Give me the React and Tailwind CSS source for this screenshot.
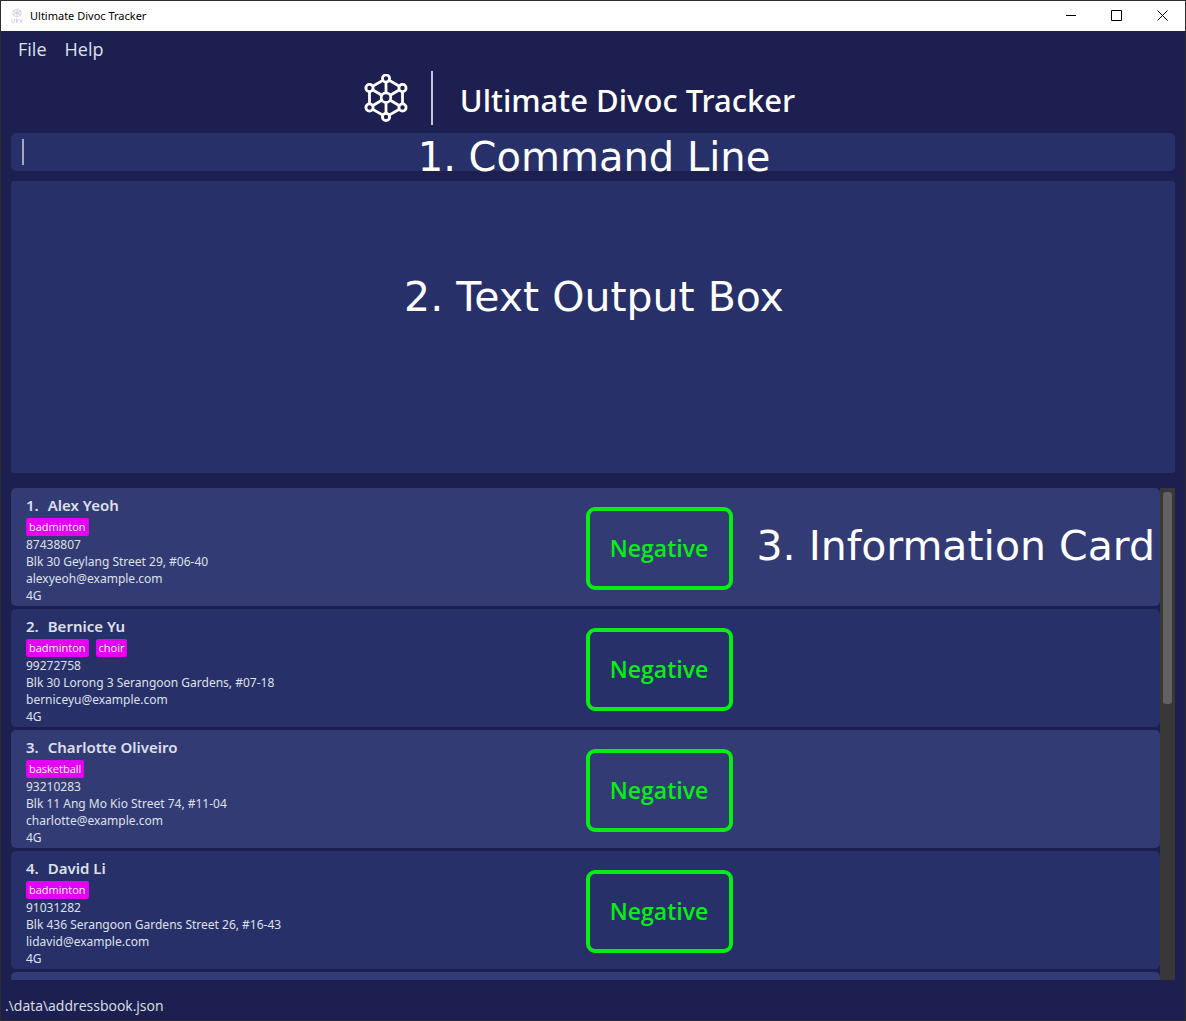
import React from "react";

const people = [
  { name: "Alex Yeoh", tags: ["badminton"], phone: "87438807", address: "Blk 30 Geylang Street 29, #06-40", email: "alexyeoh@example.com", group: "4G" },
  { name: "Bernice Yu", tags: ["badminton", "choir"], phone: "99272758", address: "Blk 30 Lorong 3 Serangoon Gardens, #07-18", email: "berniceyu@example.com", group: "4G" },
  { name: "Charlotte Oliveiro", tags: ["basketball"], phone: "93210283", address: "Blk 11 Ang Mo Kio Street 74, #11-04", email: "charlotte@example.com", group: "4G" },
  { name: "David Li", tags: ["badminton"], phone: "91031282", address: "Blk 436 Serangoon Gardens Street 26, #16-43", email: "lidavid@example.com", group: "4G" },
];

function Molecule({ className }) {
  const outer = [[22, 4.5], [38.5, 14], [38.5, 33.5], [22, 43], [5.5, 33.5], [5.5, 14]];
  return (
    <svg viewBox="0 0 44 49" className={className} fill="none" stroke="currentColor" strokeWidth="2.8" aria-hidden="true">
      <path d="M22 4.500 38.500 14V33.500L22 43 5.500 33.500V14ZM22 4.500V43M5.500 14 38.500 33.500M38.500 14 5.500 33.500" />
      {outer.map(([x, y]) => (
        <circle key={`${x}-${y}`} cx={x} cy={y} r="3.6" className="fill-[#1c1f4f]" />
      ))}
      <circle cx="22" cy="23.7" r="4.8" className="fill-[#1c1f4f]" />
    </svg>
  );
}

function AppIcon() {
  return (
    <svg viewBox="0 0 12 16" className="h-4 w-3 text-gray-300" fill="none" stroke="currentColor" aria-hidden="true">
      <path d="M6 1 10 3V7L6 9 2 7V3ZM6 1V9M2 3 10 7M10 3 2 7" />
      <circle cx="6" cy="5" r="1.2" />
      <path d="M1 11V14Q2 15.500 3.500 14V11M5.500 11V14.500H6Q8 13 6 11ZM8.500 11 10 14.500 11.500 11" />
    </svg>
  );
}

function WindowButton({ label, children }) {
  return (
    <button type="button" aria-label={label} className="flex h-full w-[46px] items-center justify-center pb-px">
      <svg viewBox="0 0 11 11" className="size-[11px]" fill="none" stroke="black" aria-hidden="true">
        {children}
      </svg>
    </button>
  );
}

const caption = "font-['DejaVu_Sans',sans-serif] leading-[48px] whitespace-nowrap text-white";

function PersonCard({ index, person, children }) {
  return (
    <li className={`grid h-[118px] shrink-0 grid-cols-2 rounded-[5px] ${index % 2 ? "bg-[#273068]" : "bg-[#323b74]"}`}>
      <div className="pt-[7px] pl-[15px] text-[12px] leading-[17px]">
        <h2 className="flex h-[23px] gap-[9px] text-[15px] leading-[21px] font-semibold">
          <span>{index + 1}.</span>
          <span>{person.name}</span>
        </h2>
        <ul className="flex gap-[7px]">
          {person.tags.map((tag) => (
            <li key={tag} className="h-[18px] rounded-[2px] bg-[#e600f5] px-[3px] font-['Open_Sans',sans-serif] text-[11px] leading-[18px] text-white">{tag}</li>
          ))}
        </ul>
        <p>{person.phone}</p>
        <p>{person.address}</p>
        <p>{person.email}</p>
        <p>{person.group}</p>
      </div>
      <div className="flex items-center gap-6 pt-[2px]">
        <div className="flex h-[83px] w-[147px] shrink-0 items-center justify-center rounded-[9px] border-4 border-[#08ee14] font-['Open_Sans',sans-serif] text-[23px] font-semibold text-[#08ee14]">
          Negative
        </div>
        {children}
      </div>
    </li>
  );
}

export default function App() {
  return (
    <div className="flex h-screen flex-col border border-[#2d2d30] bg-[#1c1f4f] font-['Noto_Sans',sans-serif] text-[#dfe0ea]">
      <header className="flex h-[30px] shrink-0 items-center bg-white pl-[10px] text-black">
        <AppIcon />
        <h1 className="ml-[7px] flex-1 text-[11px]">Ultimate Divoc Tracker</h1>
        <WindowButton label="Minimize"><path d="M1 5.500H11" /></WindowButton>
        <WindowButton label="Maximize"><path d="M.5.500H10.500V10.500H.5Z" /></WindowButton>
        <WindowButton label="Close"><path d="M.5.500 10.500 10.500M10.500.500.500 10.500" /></WindowButton>
      </header>
      <nav className="flex h-9 shrink-0 items-center gap-[18px] pl-[17px] font-['Open_Sans',sans-serif] text-[18px]">
        <button type="button">File</button>
        <button type="button">Help</button>
      </nav>
      <div className="flex h-[66px] shrink-0 items-center justify-center pr-[27px] pb-1 text-white">
        <Molecule className="h-[49px] w-[44px]" />
        <div className="ml-[23px] h-[54px] w-[2px] bg-[#c5c6d4]" />
        <p className="ml-[27px] pt-1 text-[31px] font-medium whitespace-nowrap">Ultimate Divoc Tracker</p>
      </div>
      <main className="flex min-h-0 flex-1 flex-col px-[10px]">
        <div className="relative h-[38px] shrink-0">
          <input aria-label="Command line" className="h-full w-full rounded-[5px] bg-[#273068] px-3 outline-none" />
          <span className="absolute top-[6px] left-[11px] h-[26px] w-[2px] bg-[#a3a6c2]" />
          <span className={`pointer-events-none absolute inset-x-0 top-0 pl-[2px] text-center text-[40px] ${caption}`}>1. Command Line</span>
        </div>
        <section className="mt-[10px] flex h-[292px] shrink-0 justify-center rounded-[3px] bg-[#273068] pt-[92px] pl-[2px]">
          <p className={`text-[41px] ${caption}`}>2. Text Output Box</p>
        </section>
        <section className="mt-[15px] flex min-h-0 flex-1">
          <ul className="flex min-w-0 flex-1 flex-col gap-[3px] overflow-hidden">
            {people.map((person, i) => (
              <PersonCard key={person.phone} index={i} person={person}>
                {i === 0 && <p className={`pb-1 text-[41px] ${caption}`}>3. Information Card</p>}
              </PersonCard>
            ))}
            <li className="h-[118px] shrink-0 rounded-[5px] bg-[#323b74]" />
          </ul>
          <div className="w-[15px] bg-[#383838] px-[3px] pt-1">
            <div className="h-[212px] rounded-[3px] bg-[#626262]" />
          </div>
        </section>
      </main>
      <footer className="flex h-[40px] shrink-0 items-center pt-[10px] pl-1 font-['Open_Sans',sans-serif] text-[14px]">.\data\addressbook.json</footer>
    </div>
  );
}
